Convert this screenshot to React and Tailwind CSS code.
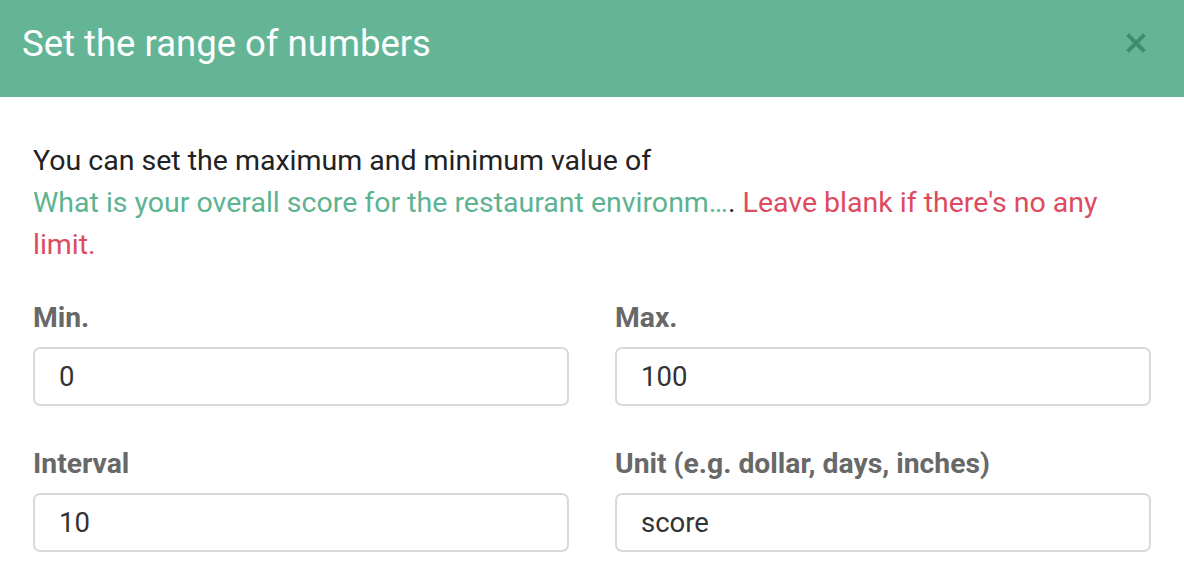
export default function App() {
  const font = { fontFamily: "Roboto, 'Noto Sans', sans-serif" };
  const Field = ({ label, value }) => (
    <div className="flex flex-col">
      <div className="text-[28.3px] leading-[32px] font-bold text-[#686868] mb-[13px]">{label}</div>
      <div className="h-[59px] border-2 border-[#d9d9d9] rounded-[7px] flex items-center pl-[24px] text-[27.5px] text-[#333333]">
        {value}
      </div>
    </div>
  );
  return (
    <div style={font} className="w-[1184px] h-[588px] bg-white overflow-hidden">
      <div className="h-[97px] bg-[#63b595] flex items-center justify-between pl-[22px] pr-[38px]">
        <div className="text-[36.5px] text-white leading-none pb-[8px]">Set the range of numbers</div>
        <svg width="20" height="20" viewBox="0 0 20 20" className="mt-[-11px]">
          <path d="M3 3 L17 17 M17 3 L3 17" stroke="#3f8c6e" strokeWidth="4" strokeLinecap="square" />
        </svg>
      </div>
      <div className="px-[33px] pt-[43px]">
        <p className="text-[28.5px] leading-[42px] text-[#222222]">
          You can set the maximum and minimum value of
          <br />
          <span className="text-[#5db391]">What is your overall score for the restaurant environm…</span>
          <span>. </span>
          <span className="text-[#dd4b5e]">Leave blank if there's no any limit.</span>
        </p>
        <div className="grid grid-cols-2 gap-x-[46px] gap-y-[42px] mt-[36px]">
          <Field label="Min." value="0" />
          <Field label="Max." value="100" />
          <Field label="Interval" value="10" />
          <Field label="Unit (e.g. dollar, days, inches)" value="score" />
        </div>
      </div>
    </div>
  );
}
